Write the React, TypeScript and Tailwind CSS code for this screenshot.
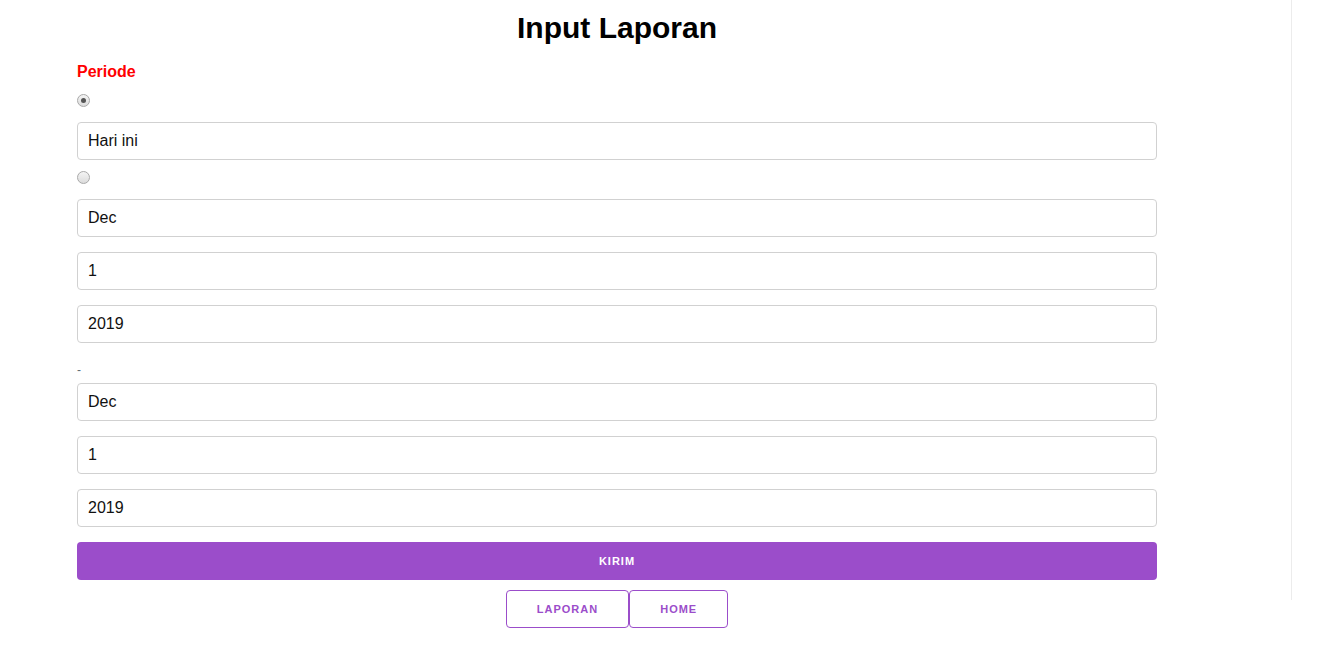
import React from "react";

const Radio = ({ checked }: { checked?: boolean }) => (
  <div className="flex h-[13px] w-[13px] items-center justify-center rounded-full border border-[#a9a9a9] bg-gradient-to-b from-[#f4f4f4] to-[#dcdcdc]">
    {checked && <div className="h-[5px] w-[5px] rounded-full bg-[#555]" />}
  </div>
);

const Field = ({ value }: { value: string }) => (
  <input
    readOnly
    defaultValue={value}
    className="block h-[38px] w-full rounded-[4px] border border-[#d1d1d1] bg-white px-[10px] text-[16px] text-[#111] outline-none"
  />
);

export default function App() {
  return (
    <div
      className="relative min-h-[648px] w-full bg-white"
      style={{ fontFamily: "'Liberation Sans', Arial, sans-serif" }}
    >
      <div className="h-[600px] w-[1292px] border-r border-[#ececec]">
        <div className="ml-[77px] w-[1080px]">
          <h1 className="flex h-[54px] items-center justify-center text-[30px] font-bold text-black">
            Input Laporan
          </h1>
          <div className="mt-[8px] h-[19px] text-[16px] font-bold leading-[19px] text-[#ff0000]">
            Periode
          </div>
          <div className="mt-[13px] mb-[15px]">
            <Radio checked />
          </div>
          <Field value="Hari ini" />
          <div className="mt-[11px] mb-[15px]">
            <Radio />
          </div>
          <div className="flex flex-col gap-[15px]">
            <Field value="Dec" />
            <Field value="1" />
            <Field value="2019" />
          </div>
          <div className="mt-[15px] h-[25px] text-[12px] leading-[25px] text-[#606c76]">-</div>
          <div className="flex flex-col gap-[15px]">
            <Field value="Dec" />
            <Field value="1" />
            <Field value="2019" />
          </div>
          <button className="mt-[15px] flex h-[38px] w-full items-center justify-center rounded-[4px] bg-[#9b4dca] text-[11px] font-bold uppercase tracking-[1px] text-white">
            Kirim
          </button>
          <div className="mt-[10px] flex justify-center">
            <button className="h-[38px] rounded-[4px] border border-[#9b4dca] px-[30px] text-[11px] font-bold uppercase tracking-[1px] text-[#9b4dca]">
              Laporan
            </button>
            <button className="h-[38px] rounded-[4px] border border-[#9b4dca] px-[30px] text-[11px] font-bold uppercase tracking-[1px] text-[#9b4dca]">
              Home
            </button>
          </div>
        </div>
      </div>
    </div>
  );
}
